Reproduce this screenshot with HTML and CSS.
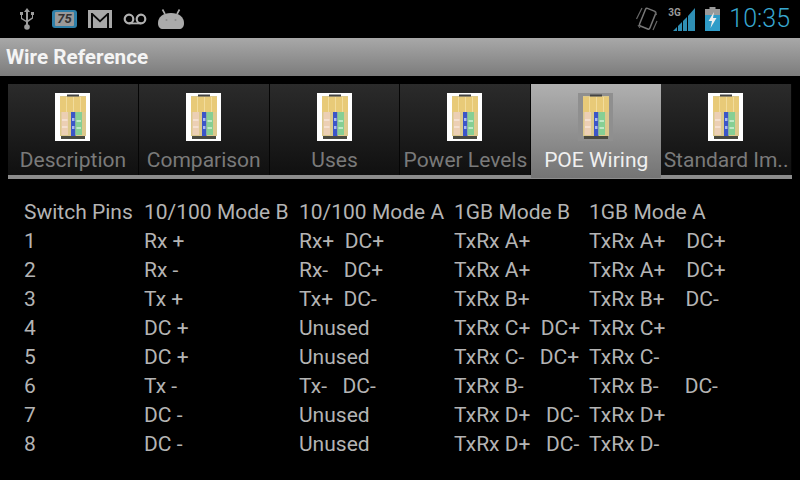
FILE: index.html
```html
<!DOCTYPE html>
<html lang="en">
<head>
<meta charset="utf-8">
<title>Wire Reference</title>
<link rel="stylesheet" href="styles.css">
</head>
<body>
<svg class="defs" width="0" height="0" aria-hidden="true">
  <defs>
    <symbol id="plug" viewBox="0 0 35 48">
      <path d="M5 3h26v40H5z" fill="#dcc98c"/>
      <rect x="12" y="1.500" width="12" height="2" fill="#444"/>
      <rect x="5" y="4" width="26" height="15" fill="#e8ca78"/>
      <rect x="11" y="4" width="1" height="15" fill="#f2dc9c"/>
      <rect x="18" y="4" width="1" height="15" fill="#f2dc9c"/>
      <rect x="25" y="4" width="1" height="15" fill="#f2dc9c"/>
      <rect x="6.500" y="19" width="6.500" height="23" fill="#eccfb4"/>
      <rect x="7" y="26" width="5.500" height="2" fill="#f4e0d0"/>
      <rect x="7" y="33" width="5.500" height="2" fill="#f4e0d0"/>
      <rect x="16" y="19" width="4.500" height="24" fill="#3c55c8"/>
      <rect x="17" y="25" width="2.500" height="3" fill="#aab8f0"/>
      <rect x="17" y="33" width="2.500" height="3" fill="#aab8f0"/>
      <rect x="20.500" y="19" width="6.500" height="23" fill="#86cf94"/>
      <rect x="21.500" y="27" width="4.500" height="2" fill="#c0e8c6"/>
      <rect x="21.500" y="34" width="4.500" height="2" fill="#c0e8c6"/>
      <rect x="6" y="43" width="24" height="3" fill="#4a4a40"/>
    </symbol>
  </defs>
</svg>

<header class="status">
  <div class="status-left">
    <svg class="ic" width="18" height="24" viewBox="0 0 18 24"><path d="M9 1l3 4h-2v13h-2V5H6zM8 15l-5-3V8H2V5h3v3H4v3l4 2.500zM10 13l4-2.500V8h-1V5h3v3h-1v3.500l-5 3.500z" fill="#9c9c9c"/><circle cx="9" cy="20" r="2.800" fill="#9c9c9c"/></svg>
    <span class="cal"><span class="cal-num">75</span></span>
    <svg class="ic" width="24" height="18" viewBox="0 0 24 18"><path d="M0 0h24v18H0z" fill="#a8a8a8"/><path d="M3 18V3h1.500L12 10l7.500-7H21v15z" fill="#0a0a0a"/><path d="M5 18V6l7 6.500L19 6v12z" fill="#a8a8a8"/></svg>
    <svg class="ic" width="24" height="12" viewBox="0 0 24 12"><circle cx="6" cy="6" r="4.300" fill="none" stroke="#b0b0b0" stroke-width="2.200"/><circle cx="18" cy="6" r="4.300" fill="none" stroke="#b0b0b0" stroke-width="2.200"/><path d="M6 9.500h12v1.800H6z" fill="#b0b0b0"/></svg>
    <svg class="ic" width="26" height="20" viewBox="0 0 26 20"><path d="M0 14C0 8 5 4 13 4s13 4 13 10c0 4-2 6-5 6H5c-3 0-5-2-5-6z" fill="#aaa"/><path d="M7 5L4.500 0.500M19 5l2.500-4.500" stroke="#aaa" stroke-width="1.600"/><circle cx="8.500" cy="11" r="1" fill="#8a8a8a"/><circle cx="17.500" cy="11" r="1" fill="#8a8a8a"/></svg>
  </div>
  <div class="status-right">
    <svg class="ic" width="24" height="28" viewBox="0 0 24 28"><rect x="7" y="4" width="11" height="19" rx="1.500" transform="rotate(22 12 14)" fill="none" stroke="#777" stroke-width="1.500"/><path d="M1.500 14L7 3M3 20l2 3M18 25l4-9M20 7l1.500 3" stroke="#666" stroke-width="1.200" fill="none"/></svg>
    <span class="net">
      <span class="net-label">3G</span>
      <svg width="24" height="24" viewBox="0 0 24 24"><path d="M1 24l4-4v4zM6 24v-5l4-4v9zM11 24V14l4-4v14zM16 24V9l7-8v23z" fill="#2f8fb5"/></svg>
    </span>
    <svg class="ic" width="15" height="24" viewBox="0 0 15 24"><path d="M4.500 0h6v2h-6z" fill="#999"/><path d="M0 2h15v6H0z" fill="#9a9a9a"/><path d="M0 8h15v16H0z" fill="#2f9cc8"/><path d="M9 5L3.500 14H7l-1.500 7L11.500 11H8z" fill="#eee"/></svg>
    <span class="clock">10:35</span>
  </div>
</header>

<div class="titlebar">Wire Reference</div>

<nav class="tabs">
  <div class="tab">
    <span class="thumb"><svg width="35" height="48"><use href="#plug"/></svg></span>
    <span class="tab-label">Description</span>
  </div>
  <div class="tab">
    <span class="thumb"><svg width="35" height="48"><use href="#plug"/></svg></span>
    <span class="tab-label">Comparison</span>
  </div>
  <div class="tab">
    <span class="thumb"><svg width="35" height="48"><use href="#plug"/></svg></span>
    <span class="tab-label">Uses</span>
  </div>
  <div class="tab">
    <span class="thumb"><svg width="35" height="48"><use href="#plug"/></svg></span>
    <span class="tab-label">Power Levels</span>
  </div>
  <div class="tab tab-active">
    <span class="thumb"><svg width="35" height="48"><use href="#plug"/></svg></span>
    <span class="tab-label">POE Wiring</span>
  </div>
  <div class="tab">
    <span class="thumb"><svg width="35" height="48"><use href="#plug"/></svg></span>
    <span class="tab-label">Standard Im..</span>
  </div>
</nav>

<main class="grid">
  <span>Switch Pins</span><span>10/100 Mode B</span><span>10/100 Mode A</span><span>1GB Mode B</span><span>1GB Mode A</span>
  <span>1</span><span>Rx +</span><span>Rx+  DC+</span><span>TxRx A+</span><span>TxRx A+    DC+</span>
  <span>2</span><span>Rx -</span><span>Rx-   DC+</span><span>TxRx A+</span><span>TxRx A+    DC+</span>
  <span>3</span><span>Tx +</span><span>Tx+  DC-</span><span>TxRx B+</span><span>TxRx B+    DC-</span>
  <span>4</span><span>DC +</span><span>Unused</span><span>TxRx C+  DC+</span><span>TxRx C+</span>
  <span>5</span><span>DC +</span><span>Unused</span><span>TxRx C-   DC+</span><span>TxRx C-</span>
  <span>6</span><span>Tx -</span><span>Tx-   DC-</span><span>TxRx B-</span><span>TxRx B-     DC-</span>
  <span>7</span><span>DC -</span><span>Unused</span><span>TxRx D+   DC-</span><span>TxRx D+</span>
  <span>8</span><span>DC -</span><span>Unused</span><span>TxRx D+   DC-</span><span>TxRx D-</span>
</main>
</body>
</html>
```
FILE: styles.css
```css
* { box-sizing: border-box; }
html, body { margin: 0; padding: 0; }
body {
  width: 800px;
  height: 480px;
  overflow: hidden;
  background: #000;
  font-family: Roboto, "Liberation Sans", sans-serif;
  color: #b4b4b4;
}
.defs { display: block; height: 0; }
.status {
  height: 38px;
  display: flex;
  justify-content: space-between;
  align-items: center;
  padding: 0 10px 0 18px;
}
.status-left { display: flex; align-items: center; gap: 11px; }
.status-right { display: flex; align-items: center; gap: 9px; }
.ic { display: block; }
.cal {
  width: 25px;
  height: 18px;
  margin-left: 5px;
  background: #2f7fa8;
  border-radius: 3px;
  display: flex;
  align-items: center;
  justify-content: center;
}
.cal-num {
  background: #9a9a9a;
  color: #333;
  font-size: 13px;
  font-weight: 700;
  font-style: italic;
  line-height: 14px;
  padding: 0 2px;
  border-radius: 1px;
}
.net { display: flex; align-items: flex-end; position: relative; width: 28px; height: 24px; justify-content: flex-end; }
.net-label {
  position: absolute;
  left: 0;
  top: 0;
  font-size: 10px;
  font-weight: 700;
  line-height: 11px;
  color: #9a9a9a;
}
.clock { font-size: 25px; color: #38a8d0; line-height: 28px; font-weight: 300; }
.titlebar {
  height: 38px;
  background: linear-gradient(#a8a8a8, #7c7c7c);
  color: #f4f4f4;
  font-size: 20.7px;
  font-weight: 700;
  line-height: 39px;
  padding-left: 6px;
  font-family: Roboto, sans-serif;
}
.tabs {
  margin: 8px 8px 0;
  height: 95px;
  display: flex;
  background: linear-gradient(#000 0, #000 91px, #8c8c8c 91px, #8c8c8c 95px);
}
.tab {
  flex: 1 1 0;
  min-width: 0;
  height: 91px;
  background: linear-gradient(#2b2b2b, #101010);
  border-right: 1px solid #050505;
  display: flex;
  flex-direction: column;
  align-items: center;
  padding-top: 9px;
}
.tab-active {
  height: 94px;
  border-right: 0;
  background: linear-gradient(#b0b0b0, #747474);
}
.thumb { display: block; width: 35px; height: 48px; background: #fff; flex: none; margin-left: -1px; }
.thumb svg { display: block; filter: blur(0.5px); }
.tab-active .thumb { background: #8f8f8f; }
.tab-label {
  font-size: 21px;
  line-height: 24px;
  margin-top: 7px;
  color: #7a7a7a;
  white-space: nowrap;
}
.tab-active .tab-label { color: #f0f0f0; }
.grid {
  display: grid;
  grid-template-columns: 120px 155px 155px 135px 1fr;
  grid-auto-rows: 29px;
  padding: 19px 0 0 24px;
  font-size: 21px;
  line-height: 29px;
}
.grid span { white-space: pre; }
```
